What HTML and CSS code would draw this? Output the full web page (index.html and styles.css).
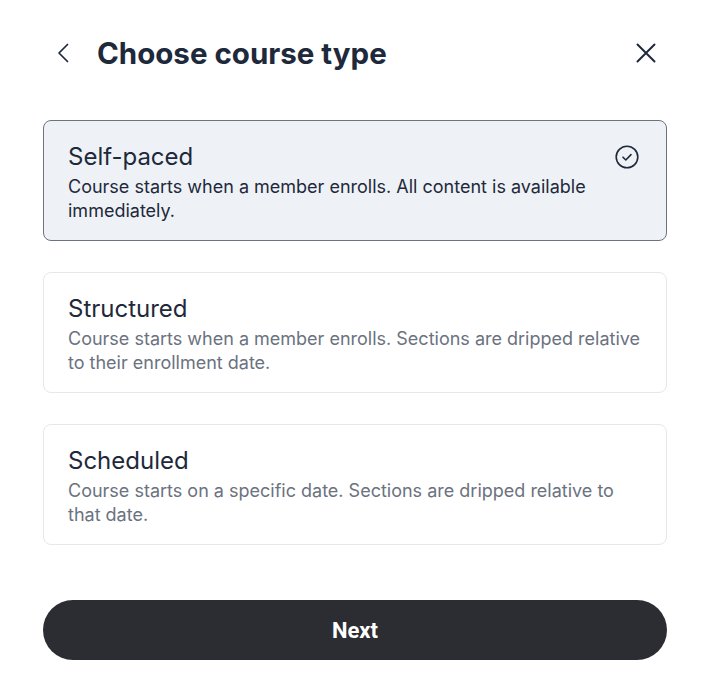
FILE: index.html
```html
<!DOCTYPE html>
<html lang="en">
<head>
    <meta charset="UTF-8">
    <meta name="viewport" content="width=device-width, initial-scale=1.0">
    <title>Choose course type</title>
    <link rel="stylesheet" href="styles.css">
</head>
<body>
    <div class="modal">
        <header class="modal-header">
            <button class="icon-btn back" aria-label="Back">
                <svg width="24" height="24" viewBox="0 0 24 24" fill="none" stroke="currentColor" stroke-width="1.7" stroke-linecap="round" stroke-linejoin="round"><path d="M15.5 3.5l-8.5 8.5 8.5 8.5"/></svg>
            </button>
            <h1>Choose course type</h1>
            <button class="icon-btn close" aria-label="Close">
                <svg width="24" height="24" viewBox="0 0 24 24" fill="none" stroke="currentColor" stroke-width="2" stroke-linecap="round"><path d="M3.5 3.5l17 17M20.5 3.5l-17 17"/></svg>
            </button>
        </header>

        <div class="options">
            <div class="option selected">
                <div class="option-text">
                    <div class="option-title">Self-paced</div>
                    <div class="option-desc">Course starts when a member enrolls. All content is available immediately.</div>
                </div>
                <svg class="check" width="24" height="24" viewBox="0 0 24 24" fill="none" stroke="currentColor" stroke-width="1.6" stroke-linecap="round" stroke-linejoin="round"><circle cx="12" cy="12" r="10.8"/><path d="M8 12.2l2.8 2.8 5.2-5.4"/></svg>
            </div>
            <div class="option">
                <div class="option-text">
                    <div class="option-title">Structured</div>
                    <div class="option-desc">Course starts when a member enrolls. Sections are dripped relative to their enrollment date.</div>
                </div>
            </div>
            <div class="option">
                <div class="option-text">
                    <div class="option-title">Scheduled</div>
                    <div class="option-desc">Course starts on a specific date. Sections are dripped relative to that date.</div>
                </div>
            </div>
        </div>

        <button class="next-btn">Next</button>
    </div>
</body>
</html>
```

FILE: styles.css
```css
/* General Styles */
body {
    font-family: 'Inter', 'Noto Sans', sans-serif;
    margin: 0;
    padding: 0;
    background: #fff;
    color: #1e293b;
}

.modal {
    padding: 24px 37px 27px 43px;
    width: 624px;
}

/* Header */
.modal-header {
    display: flex;
    align-items: center;
    height: 58px;
    margin-bottom: 38px;
}

.modal-header h1 {
    flex: 1;
    margin: 0;
    font-size: 29.5px;
    font-weight: 700;
    color: #1e293b;
}

.icon-btn {
    background: none;
    border: none;
    padding: 0;
    color: #1e293b;
    display: flex;
    cursor: pointer;
}

.icon-btn.back {
    margin-left: 9px;
    margin-right: 21px;
}

.icon-btn.close {
    margin-right: 9px;
}

/* Options */
.options {
    display: flex;
    flex-direction: column;
    gap: 31px;
}

.option {
    display: flex;
    align-items: flex-start;
    border: 1px solid #e5e7eb;
    border-radius: 8px;
    padding: 22px 24px 17px 24px;
}

.option.selected {
    background: #eef2f6;
    border-color: #6b7280;
}

.option-text {
    flex: 1;
}

.option-title {
    font-size: 24px;
    line-height: 28px;
    color: #1e293b;
}

.option-desc {
    font-size: 18px;
    line-height: 24px;
    color: #6b7280;
    margin-top: 4px;
}

.option.selected .option-desc {
    color: #1e293b;
}

.check {
    color: #1e293b;
    margin: 2px 3px 0 16px;
    flex-shrink: 0;
}

/* Button */
.next-btn {
    display: block;
    width: 100%;
    height: 60px;
    margin-top: 55px;
    border: none;
    border-radius: 30px;
    background: #2b2d33;
    color: #fff;
    font-family: 'Roboto', sans-serif;
    font-size: 22px;
    font-weight: 700;
    cursor: pointer;
}
```
